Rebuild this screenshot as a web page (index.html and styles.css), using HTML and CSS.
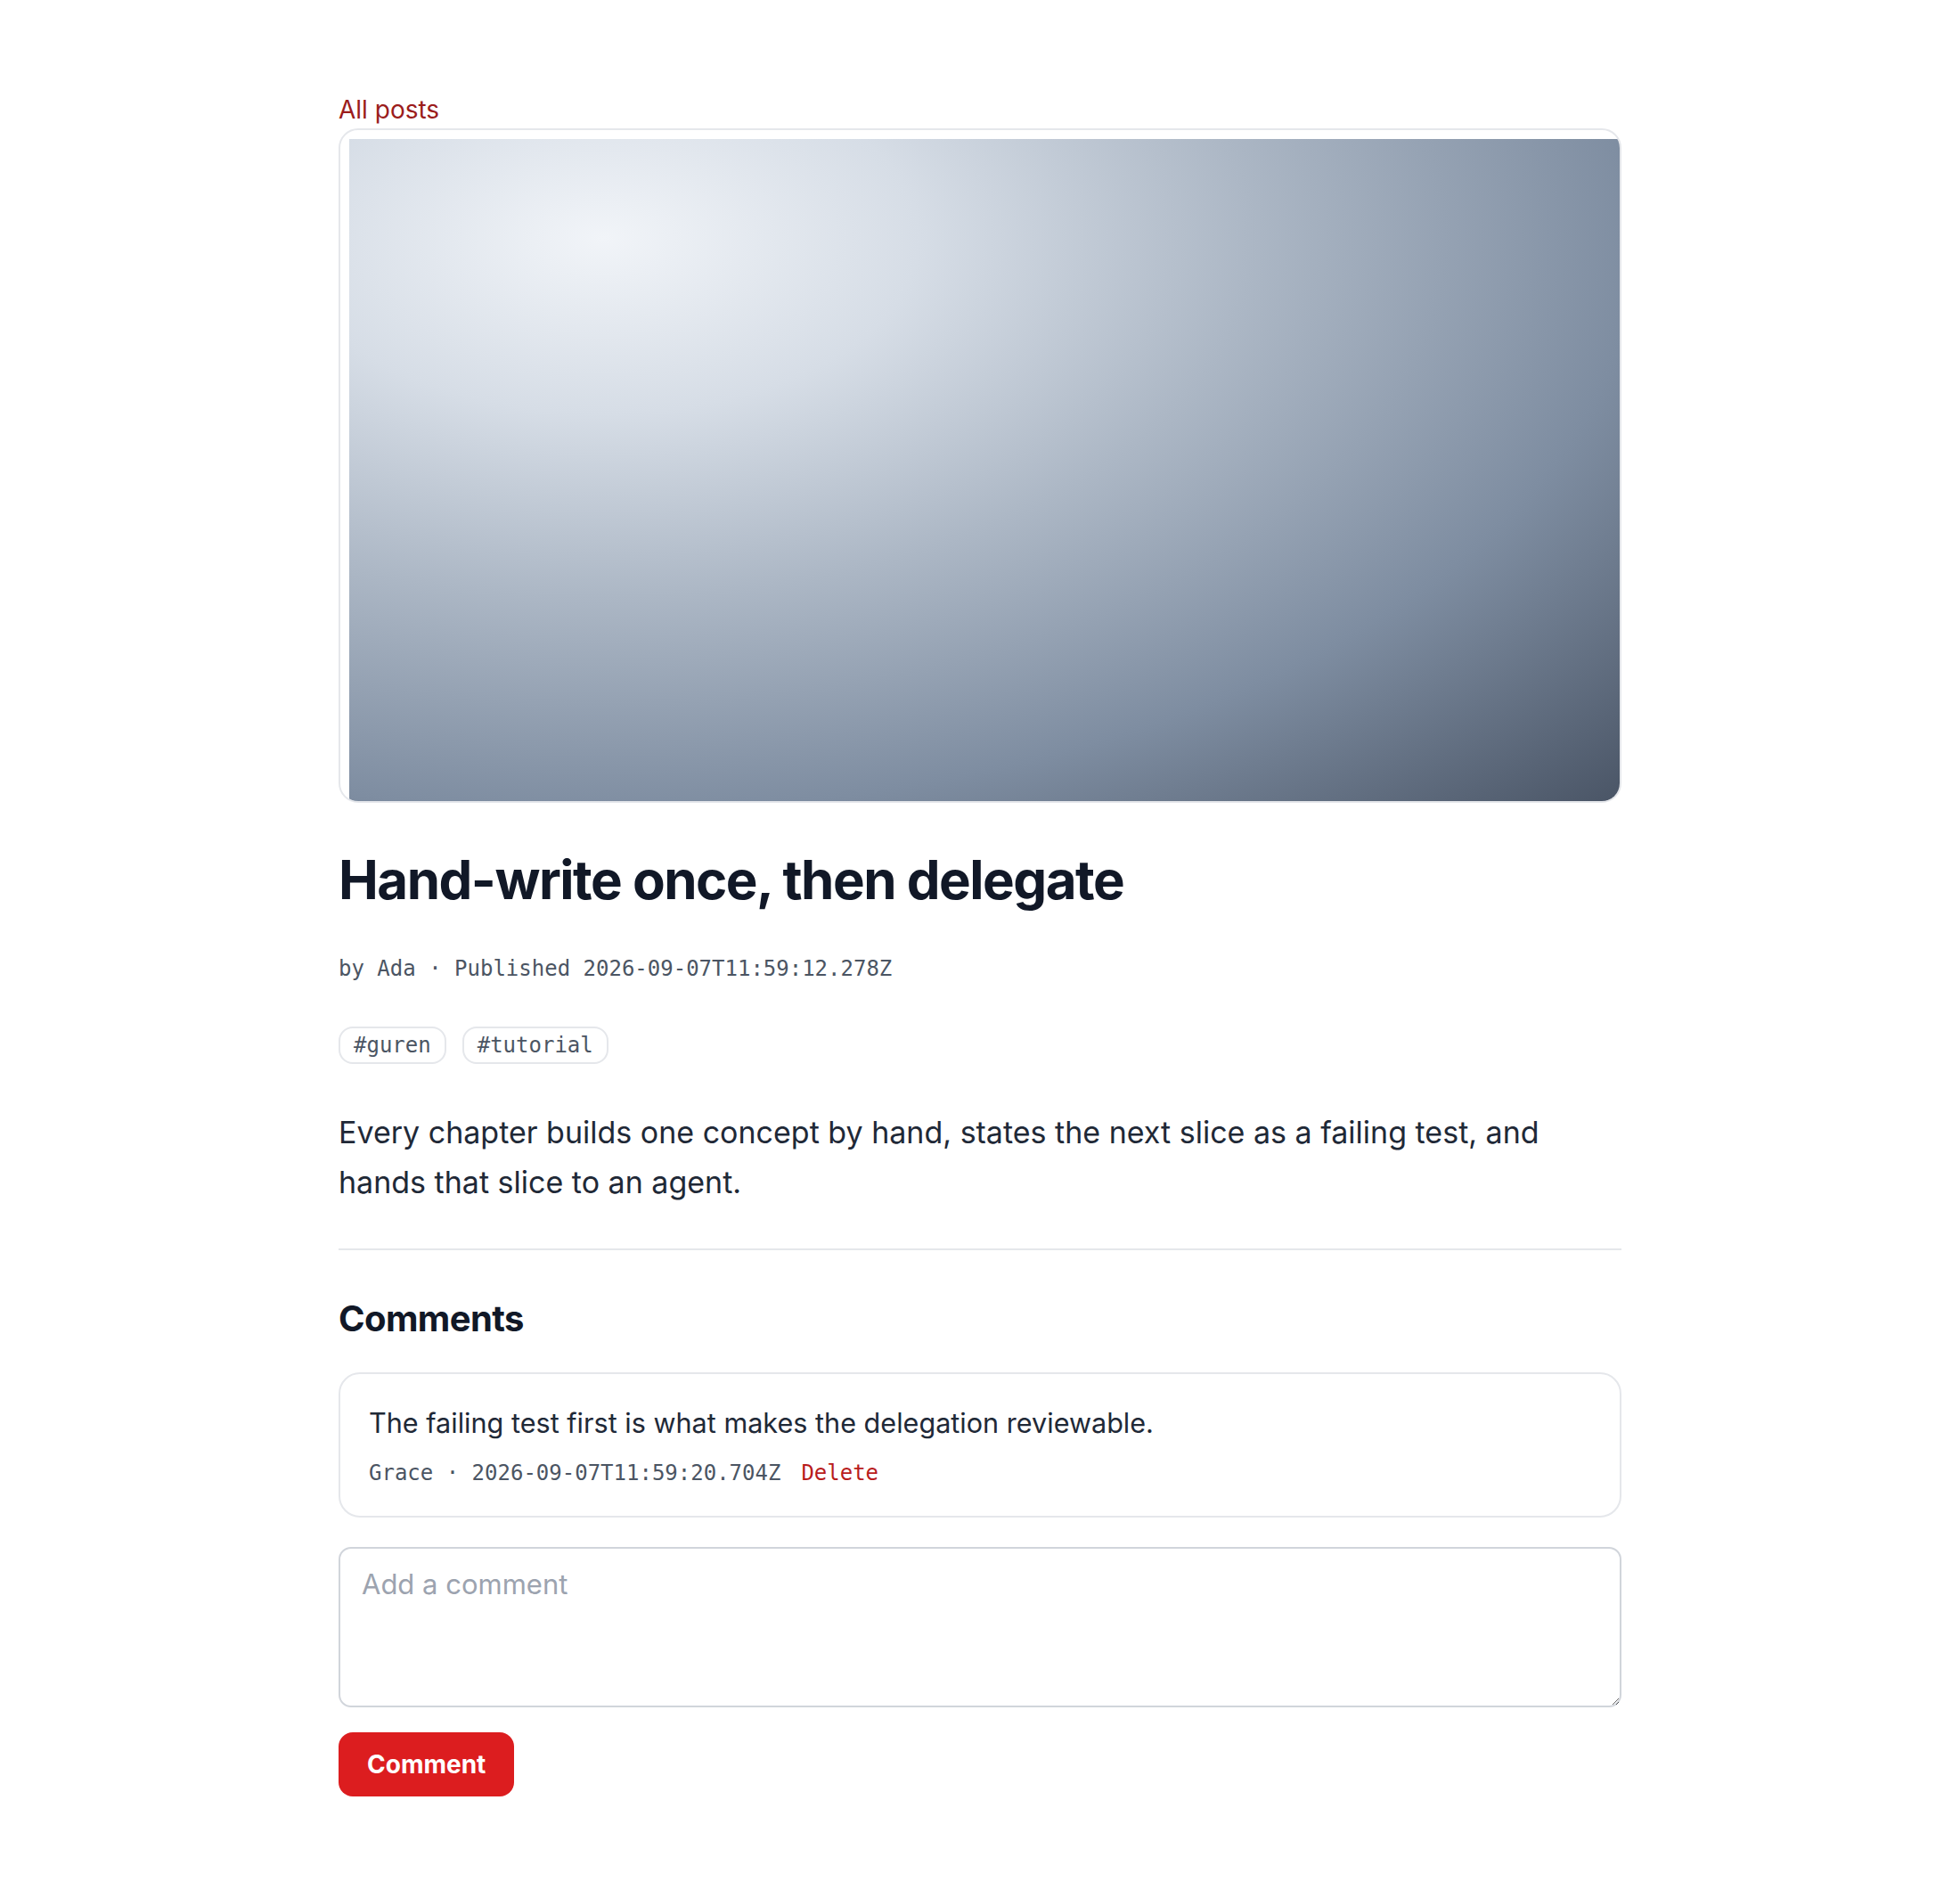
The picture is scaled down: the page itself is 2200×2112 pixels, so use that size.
FILE: index.html
```html
<!DOCTYPE html>
<html lang="en">
<head>
    <meta charset="UTF-8">
    <meta name="viewport" content="width=device-width, initial-scale=1.0">
    <title>Hand-write once, then delegate</title>
    <link rel="stylesheet" href="styles.css">
</head>
<body>
    <main class="post">
        <a class="back-link" href="#">All posts</a>

        <div class="cover">
            <div class="cover-image"></div>
        </div>

        <h1 class="post-title">Hand-write once, then delegate</h1>
        <p class="post-meta">by Ada · Published 2026-09-07T11:59:12.278Z</p>

        <div class="tags">
            <span class="tag">#guren</span>
            <span class="tag">#tutorial</span>
        </div>

        <p class="post-body">Every chapter builds one concept by hand, states the next slice as a failing test, and hands that slice to an agent.</p>

        <hr class="divider">

        <h2 class="comments-title">Comments</h2>

        <div class="comment">
            <p class="comment-text">The failing test first is what makes the delegation reviewable.</p>
            <div class="comment-meta">
                <span>Grace · 2026-09-07T11:59:20.704Z</span>
                <button type="button" class="delete-btn">Delete</button>
            </div>
        </div>

        <form class="comment-form" onsubmit="event.preventDefault()">
            <textarea class="comment-input" placeholder="Add a comment"></textarea>
            <button type="submit" class="comment-btn">Comment</button>
        </form>
    </main>
</body>
</html>
```

FILE: styles.css
```css
body {
    margin: 0;
    background-color: #ffffff;
    font-family: Inter, "Noto Sans", sans-serif;
    color: #111827;
}
.post {
    max-width: 1440px;
    margin: 0 auto;
    padding: 102px 0 96px;
    display: flex;
    flex-direction: column;
    align-items: flex-start;
}
.back-link {
    font-size: 28px;
    line-height: 42px;
    color: #9b1c1c;
    text-decoration: none;
}
.cover {
    align-self: stretch;
    border: 2px solid #e5e7eb;
    border-radius: 22px;
    overflow: hidden;
    padding: 10px 0 0 10px;
}
.cover-image {
    height: 743px;
    background: radial-gradient(ellipse farthest-corner at 20% 15%, #f1f4f8 0%, #d6dde6 22%, #acb7c5 45%, #7e8da1 72%, #4a5566 100%);
}
.post-title {
    margin: 50px 0 0;
    font-size: 60px;
    line-height: 72px;
    font-weight: 700;
    letter-spacing: -0.025em;
    color: #111827;
}
.post-meta {
    margin: 46px 0 0;
    font-family: "DejaVu Sans Mono", monospace;
    font-size: 24px;
    line-height: 36px;
    color: #4b5563;
}
.tags {
    display: flex;
    gap: 18px;
    margin-top: 47px;
}
.tag {
    font-family: "DejaVu Sans Mono", monospace;
    font-size: 24px;
    line-height: 36px;
    padding: 1px 15px;
    border: 2px solid #e5e7eb;
    border-radius: 16px;
    color: #4b5563;
}
.post-body {
    margin: 49px 0 0;
    font-size: 34px;
    line-height: 56px;
    color: #1f2937;
}
.divider {
    align-self: stretch;
    margin: 46px 0 0;
    border: none;
    border-top: 2px solid #e5e7eb;
}
.comments-title {
    margin: 49px 0 0;
    font-size: 40px;
    line-height: 56px;
    font-weight: 700;
    letter-spacing: -0.015em;
    color: #111827;
}
.comment {
    align-self: stretch;
    margin-top: 32px;
    padding: 32px 32px 30px;
    border: 2px solid #e5e7eb;
    border-radius: 24px;
}
.comment-text {
    margin: 0;
    font-size: 30.6px;
    line-height: 45px;
    color: #1f2937;
}
.comment-meta {
    display: flex;
    align-items: center;
    gap: 23px;
    margin-top: 16px;
    font-family: "DejaVu Sans Mono", monospace;
    font-size: 24px;
    line-height: 36px;
    color: #4b5563;
}
.delete-btn {
    padding: 0;
    border: none;
    background: none;
    font-family: inherit;
    font-size: inherit;
    line-height: inherit;
    color: #b91c1c;
    cursor: pointer;
}
.comment-form {
    align-self: stretch;
    display: flex;
    flex-direction: column;
    align-items: flex-start;
    margin-top: 33px;
}
.comment-input {
    box-sizing: border-box;
    width: 100%;
    height: 180px;
    padding: 16px 24px;
    border: 2px solid #d1d5db;
    border-radius: 14px;
    font-family: Inter, sans-serif;
    font-size: 31px;
    line-height: 48px;
    color: #111827;
}
.comment-input::placeholder {
    color: #9ca3af;
}
.comment-btn {
    margin-top: 28px;
    height: 72px;
    padding: 0 32px;
    border: none;
    border-radius: 16px;
    background-color: #dc1d1f;
    color: #ffffff;
    font-family: Inter, sans-serif;
    font-size: 28px;
    font-weight: 700;
    cursor: pointer;
}
```
